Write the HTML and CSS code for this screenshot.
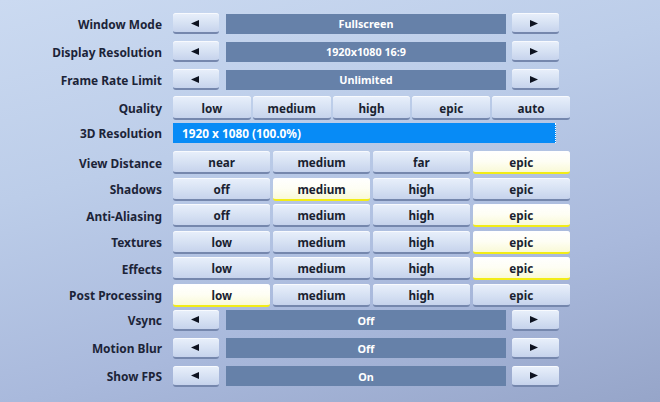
FILE: index.html
```html
<!DOCTYPE html>
<html>
<head>
<meta charset="utf-8">
<link rel="stylesheet" href="styles.css">
</head>
<body>
<div class="panel">
  <div class="row r-arrow first">
    <div class="label">Window Mode</div>
    <div class="arrowctl">
      <div class="btn arrow"><svg width="8" height="7" viewBox="0 0 8 7"><polygon points="0,3.5 8,0 8,7" fill="#0d1220"/></svg></div>
      <div class="bar">Fullscreen</div>
      <div class="btn arrow"><svg width="8" height="7" viewBox="0 0 8 7"><polygon points="8,3.5 0,0 0,7" fill="#0d1220"/></svg></div>
    </div>
  </div>
  <div class="row r-arrow">
    <div class="label">Display Resolution</div>
    <div class="arrowctl">
      <div class="btn arrow"><svg width="8" height="7" viewBox="0 0 8 7"><polygon points="0,3.5 8,0 8,7" fill="#0d1220"/></svg></div>
      <div class="bar">1920x1080 16:9</div>
      <div class="btn arrow"><svg width="8" height="7" viewBox="0 0 8 7"><polygon points="8,3.5 0,0 0,7" fill="#0d1220"/></svg></div>
    </div>
  </div>
  <div class="row r-arrow">
    <div class="label">Frame Rate Limit</div>
    <div class="arrowctl">
      <div class="btn arrow"><svg width="8" height="7" viewBox="0 0 8 7"><polygon points="0,3.5 8,0 8,7" fill="#0d1220"/></svg></div>
      <div class="bar">Unlimited</div>
      <div class="btn arrow"><svg width="8" height="7" viewBox="0 0 8 7"><polygon points="8,3.5 0,0 0,7" fill="#0d1220"/></svg></div>
    </div>
  </div>
  <div class="row r-quality">
    <div class="label">Quality</div>
    <div class="choices five">
      <div class="btn">low</div>
      <div class="btn">medium</div>
      <div class="btn">high</div>
      <div class="btn">epic</div>
      <div class="btn">auto</div>
    </div>
  </div>
  <div class="row r-res">
    <div class="label">3D Resolution</div>
    <div class="slider">1920 x 1080 (100.0%)</div>
  </div>
  <div class="row r-four r-view">
    <div class="label">View Distance</div>
    <div class="choices four">
      <div class="btn">near</div>
      <div class="btn">medium</div>
      <div class="btn">far</div>
      <div class="btn sel">epic</div>
    </div>
  </div>
  <div class="row r-four">
    <div class="label">Shadows</div>
    <div class="choices four">
      <div class="btn">off</div>
      <div class="btn sel">medium</div>
      <div class="btn">high</div>
      <div class="btn">epic</div>
    </div>
  </div>
  <div class="row r-four">
    <div class="label">Anti-Aliasing</div>
    <div class="choices four">
      <div class="btn">off</div>
      <div class="btn">medium</div>
      <div class="btn">high</div>
      <div class="btn sel">epic</div>
    </div>
  </div>
  <div class="row r-four">
    <div class="label">Textures</div>
    <div class="choices four">
      <div class="btn">low</div>
      <div class="btn">medium</div>
      <div class="btn">high</div>
      <div class="btn sel">epic</div>
    </div>
  </div>
  <div class="row r-four">
    <div class="label">Effects</div>
    <div class="choices four">
      <div class="btn">low</div>
      <div class="btn">medium</div>
      <div class="btn">high</div>
      <div class="btn sel">epic</div>
    </div>
  </div>
  <div class="row r-four">
    <div class="label">Post Processing</div>
    <div class="choices four">
      <div class="btn sel">low</div>
      <div class="btn">medium</div>
      <div class="btn">high</div>
      <div class="btn">epic</div>
    </div>
  </div>
  <div class="row r-arrow r-vsync">
    <div class="label">Vsync</div>
    <div class="arrowctl">
      <div class="btn arrow"><svg width="8" height="7" viewBox="0 0 8 7"><polygon points="0,3.5 8,0 8,7" fill="#0d1220"/></svg></div>
      <div class="bar">Off</div>
      <div class="btn arrow"><svg width="8" height="7" viewBox="0 0 8 7"><polygon points="8,3.5 0,0 0,7" fill="#0d1220"/></svg></div>
    </div>
  </div>
  <div class="row r-arrow">
    <div class="label">Motion Blur</div>
    <div class="arrowctl">
      <div class="btn arrow"><svg width="8" height="7" viewBox="0 0 8 7"><polygon points="0,3.5 8,0 8,7" fill="#0d1220"/></svg></div>
      <div class="bar">Off</div>
      <div class="btn arrow"><svg width="8" height="7" viewBox="0 0 8 7"><polygon points="8,3.5 0,0 0,7" fill="#0d1220"/></svg></div>
    </div>
  </div>
  <div class="row r-arrow">
    <div class="label">Show FPS</div>
    <div class="arrowctl">
      <div class="btn arrow"><svg width="8" height="7" viewBox="0 0 8 7"><polygon points="0,3.5 8,0 8,7" fill="#0d1220"/></svg></div>
      <div class="bar">On</div>
      <div class="btn arrow"><svg width="8" height="7" viewBox="0 0 8 7"><polygon points="8,3.5 0,0 0,7" fill="#0d1220"/></svg></div>
    </div>
  </div>
</div>
</body>
</html>
```
FILE: styles.css
```css
html, body {
  margin: 0;
  padding: 0;
  width: 660px;
  height: 402px;
  overflow: hidden;
}
body {
  background: linear-gradient(165deg, #cbdaf1 0%, #bccde9 35%, #a9b9dc 70%, #96a5c9 100%);
  font-family: "Noto Sans", "Open Sans", sans-serif;
  font-weight: 700;
}
.panel {
  display: flex;
  flex-direction: column;
  padding-top: 13px;
}
.row {
  display: flex;
  align-items: center;
}
.label {
  width: 162px;
  text-align: right;
  font-size: 11.9px;
  color: #1c2438;
  margin-right: 11px;
  white-space: nowrap;
}
.r-arrow { height: 21px; margin-top: 7px; }
.r-arrow.first { margin-top: 0; }
.r-quality { height: 24px; margin-top: 6px; }
.r-res { height: 20px; margin-top: 3px; }
.r-four { height: 23px; margin-top: 3.5px; }
.r-view { margin-top: 8px; }
.r-vsync { margin-top: 3px; }

.btn {
  box-sizing: border-box;
  height: 100%;
  border-radius: 3px;
  background: linear-gradient(180deg, #e9f0fb 0%, #d6e1f3 55%, #c6d3ec 100%);
  border-bottom: 2px solid #7587ad;
  box-shadow: inset 0 1px 0 rgba(255,255,255,0.7);
  display: flex;
  align-items: center;
  justify-content: center;
  font-size: 11.7px;
  color: #1a1f30;
  padding-top: 1px;
}
.btn.sel {
  background: linear-gradient(180deg, #ffffff 0%, #fefef4 50%, #f9f9d6 100%);
  border-bottom: 2px solid #f2ec16;
}
.arrowctl {
  display: flex;
  height: 100%;
  align-items: stretch;
}
.arrow {
  width: 46px;
  height: 21px;
  padding-top: 1px;
}
.arrow svg { display: block; margin-right: 3px; }
.bar {
  width: 280px;
  height: 20px;
  margin: 0 6px 0 7px;
  background: #6681a9;
  color: #ffffff;
  font-size: 10.8px;
  display: flex;
  align-items: center;
  justify-content: center;
  align-self: center;
}
.arrowctl .arrow:last-child { width: 47px; }
.choices {
  display: grid;
  width: 397px;
  height: 100%;
}
.five { grid-template-columns: repeat(5, 1fr); gap: 2px; }
.four { grid-template-columns: repeat(4, 1fr); gap: 2.5px; }
.slider {
  box-sizing: border-box;
  width: 383px;
  height: 20px;
  background: #078bf6;
  color: #ffffff;
  font-size: 11.8px;
  padding-left: 9px;
  display: flex;
  align-items: center;
  border-right: 1px dotted #ffffff;
}
```
